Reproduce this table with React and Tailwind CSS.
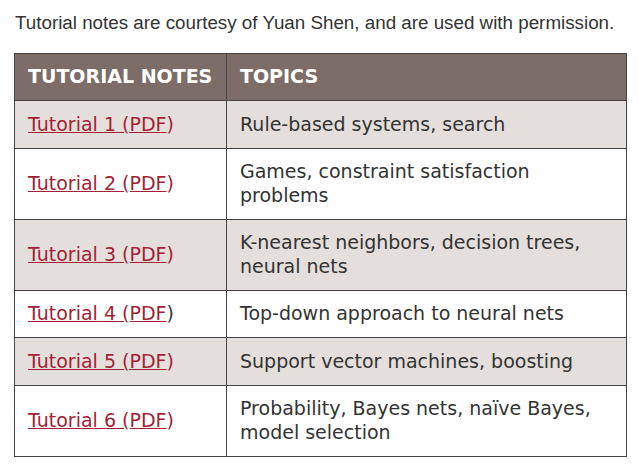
export default function App() {
  const rows = [
    { n: 1, t: "Rule-based systems, search", s: true },
    { n: 2, t: "Games, constraint satisfaction problems", s: false },
    { n: 3, t: "K-nearest neighbors, decision trees, neural nets", s: true },
    { n: 4, t: "Top-down approach to neural nets", s: false, plain: true },
    { n: 5, t: "Support vector machines, boosting", s: true },
    { n: 6, t: "Probability, Bayes nets, naïve Bayes, model selection", s: false },
  ];
  return (
    <div className="bg-white w-[639px] h-[470px] pt-[10px] pl-[14px]">
      <p className="text-[18.8px] leading-[26px] text-[#333] pl-px whitespace-nowrap" style={{ fontFamily: '"Liberation Sans", Arial, sans-serif' }}>
        Tutorial notes are courtesy of Yuan Shen, and are used with permission.
      </p>
      <table className="mt-[17px] w-[613px] border-collapse text-[19px] leading-[23.5px]" style={{ fontFamily: '"DejaVu Sans", Verdana, sans-serif' }}>
        <thead>
          <tr className="bg-[#7c6d68] text-white h-[47px]">
            <th className="w-[212px] border border-[#444] text-left px-[13px] font-bold">TUTORIAL NOTES</th>
            <th className="border border-[#444] text-left px-[13px] font-bold">TOPICS</th>
          </tr>
        </thead>
        <tbody className="text-[#333]">
          {rows.map((r) => (
            <tr key={r.n} className={r.s ? "bg-[#e4dfdc]" : "bg-white"}>
              <td className="border border-[#444] px-[13px] py-[11.5px] align-middle">
                <a href="#" className="text-[#a31f34] underline">Tutorial {r.n} (PDF</a>
                <span className={r.plain ? "text-[#333]" : "text-[#a31f34]"}>)</span>
              </td>
              <td className="border border-[#444] px-[13px] py-[11.5px] align-middle">{r.t}</td>
            </tr>
          ))}
        </tbody>
      </table>
    </div>
  );
}
